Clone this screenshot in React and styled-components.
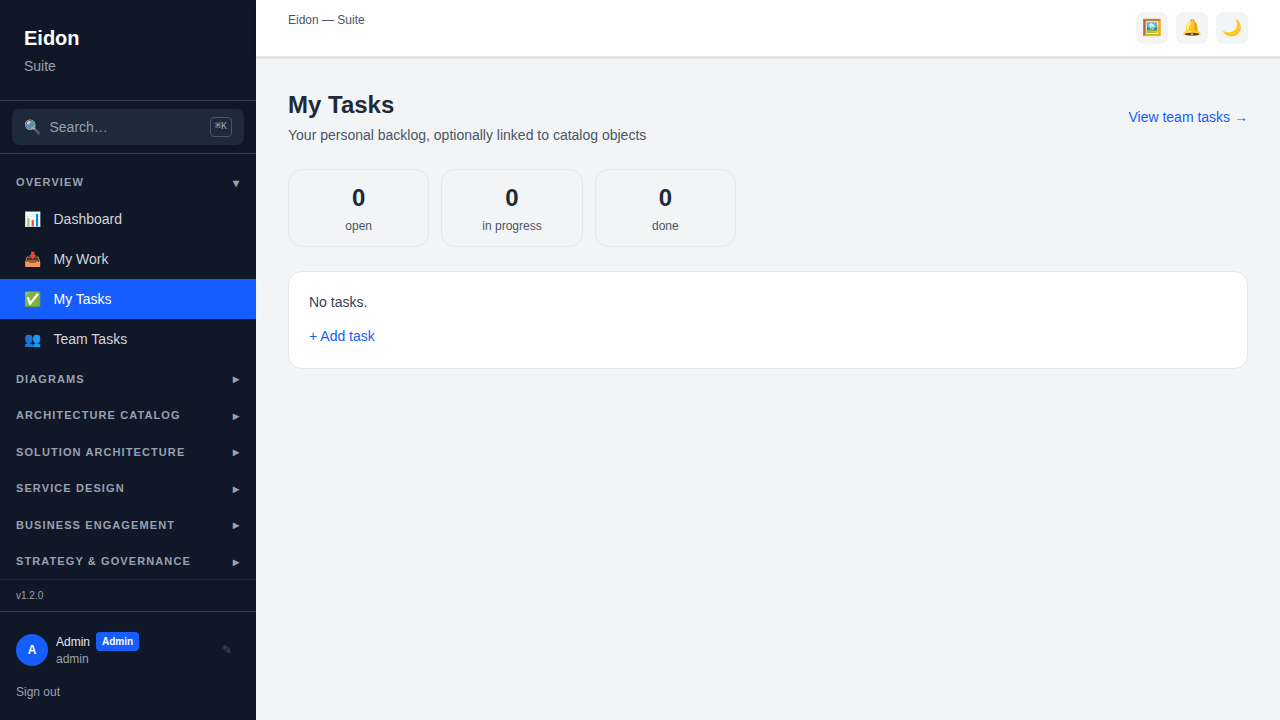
import React, { useState } from 'react';
import styled, { createGlobalStyle } from 'styled-components';

const GlobalStyle = createGlobalStyle`
  *, *::before, *::after {
    box-sizing: border-box;
  }

  body {
    margin: 0;
    font-family: 'Liberation Sans', Arial, sans-serif;
    font-size: 16px;
    line-height: 1.5;
    color: #1e2939;
    background: #f3f4f6;
  }

  h1, h2, p {
    margin: 0;
  }

  button {
    font: inherit;
    color: inherit;
    border: 0;
    padding: 0;
    background: transparent;
    cursor: pointer;
  }

  a {
    color: inherit;
    text-decoration: none;
  }
`;

const Layout = styled.div`
  display: flex;
  height: 100vh;
  overflow: hidden;
`;

// Sidebar
const Sidebar = styled.aside`
  display: flex;
  flex-direction: column;
  flex-shrink: 0;
  width: 256px;
  background: #101828;
  color: #fff;
`;

const Brand = styled.div`
  padding: 24px;
  border-bottom: 1px solid #364153;
`;

const BrandName = styled.h1`
  font-size: 20px;
  line-height: 28px;
  font-weight: 700;
`;

const BrandSub = styled.p`
  margin-top: 4px;
  font-size: 14px;
  line-height: 20px;
  color: #99a1af;
`;

const SearchWrap = styled.div`
  padding: 8px 12px;
  border-bottom: 1px solid #364153;
`;

const SearchButton = styled.button`
  display: flex;
  align-items: center;
  gap: 8px;
  width: 100%;
  height: 36px;
  padding: 0 12px;
  border-radius: 8px;
  background: #1e2939;
  color: #99a1af;
  font-size: 14px;
  line-height: 20px;
  text-align: left;
`;

const Emoji = styled.span`
  width: 17.5px;
  flex-shrink: 0;
`;

const SearchLabel = styled.span`
  flex: 1;
`;

const Kbd = styled.kbd`
  padding: 2px 4px;
  border: 1px solid #4a5565;
  border-radius: 4px;
  font-family: 'Liberation Mono', monospace;
  font-size: 10px;
  line-height: 14px;
`;

const Nav = styled.nav`
  flex: 1;
  min-height: 0;
  padding: 8px 0;
  overflow: hidden;
`;

const GroupHeader = styled.button`
  display: flex;
  align-items: center;
  justify-content: space-between;
  width: 100%;
  padding: 12px 16px 8px;
  font-size: 11px;
  line-height: 16.5px;
  font-weight: 600;
  letter-spacing: 1.1px;
  text-transform: uppercase;
  color: #99a1af;
`;

const Caret = styled.span`
  padding-top: 1px;
  font-size: 12px;
  line-height: 14.5px;
`;

const NavItem = styled.a`
  display: flex;
  align-items: center;
  gap: 12px;
  padding: 10px 24px;
  font-size: 14px;
  line-height: 20px;
  color: ${({ $active }) => ($active ? '#fff' : '#d1d5dc')};
  background: ${({ $active }) => ($active ? '#155dfc' : 'transparent')};
`;

const Version = styled.div`
  padding: 8px 16px;
  border-top: 1px solid #1e2939;
  font-size: 10px;
  line-height: 15px;
  color: #99a1af;
`;

const UserPanel = styled.div`
  height: 109px;
  padding: 20px 16px 0;
  border-top: 1px solid #364153;
  font-size: 12px;
  line-height: 16px;
`;

const UserRow = styled.div`
  display: flex;
  align-items: center;
  gap: 8px;
  padding-right: 8px;
`;

const Avatar = styled.div`
  display: flex;
  align-items: center;
  justify-content: center;
  width: 32px;
  height: 32px;
  border-radius: 50%;
  background: #155dfc;
  font-weight: 700;
`;

const UserInfo = styled.div`
  flex: 1;
`;

const UserName = styled.div`
  display: flex;
  align-items: center;
  gap: 6px;
  color: #e5e7eb;
`;

const RoleBadge = styled.span`
  padding: 2px 6px;
  border-radius: 4px;
  background: #155dfc;
  color: #fff;
  font-size: 10px;
  line-height: 15px;
  font-weight: 600;
`;

const UserLogin = styled.div`
  color: #99a1af;
`;

const EditIcon = styled.span`
  color: #4a5565;
`;

const SignOut = styled.button`
  display: block;
  margin-top: 17px;
  color: #99a1af;
`;

// Main column
const Main = styled.div`
  display: flex;
  flex: 1;
  flex-direction: column;
  min-width: 0;
`;

const TopBar = styled.header`
  display: flex;
  align-items: flex-start;
  justify-content: space-between;
  padding: 12px 32px;
  border-bottom: 1px solid #e5e7eb;
  background: #fff;
  box-shadow: 0 1px 3px rgba(0, 0, 0, 0.1), 0 1px 2px -1px rgba(0, 0, 0, 0.1);
  font-size: 12px;
  line-height: 16px;
  color: #4a5565;
`;

const Actions = styled.div`
  display: flex;
  gap: 8px;
`;

const IconButton = styled.button`
  display: flex;
  align-items: center;
  justify-content: center;
  width: 32px;
  height: 32px;
  border-radius: 8px;
  background: #f3f4f6;
  font-size: 16px;
  line-height: 24px;
`;

const Content = styled.main`
  flex: 1;
  padding: 32px;
`;

const PageHeader = styled.div`
  display: flex;
  align-items: center;
  justify-content: space-between;
  margin-bottom: 24px;
`;

const PageTitle = styled.h2`
  font-size: 24px;
  line-height: 32px;
  font-weight: 700;
`;

const PageSub = styled.p`
  margin-top: 4px;
  font-size: 14px;
  line-height: 20px;
  color: #4a5565;
`;

const TextLink = styled.a`
  font-size: 14px;
  line-height: 20px;
  color: #155dfc;
`;

const Stats = styled.div`
  display: grid;
  grid-template-columns: repeat(3, 1fr);
  gap: 12px;
  max-width: 448px;
  margin-bottom: 24px;
`;

const Stat = styled.div`
  padding: 12px;
  border: 1px solid #e5e7eb;
  border-radius: 14px;
  text-align: center;
`;

const StatValue = styled.div`
  font-size: 24px;
  line-height: 32px;
  font-weight: 700;
`;

const StatLabel = styled.div`
  margin-top: 4px;
  font-size: 12px;
  line-height: 16px;
  color: #4a5565;
`;

const Card = styled.section`
  padding: 20px;
  border: 1px solid #e5e7eb;
  border-radius: 14px;
  background: #fff;
`;

const Empty = styled.p`
  margin-bottom: 12px;
  font-size: 14px;
  line-height: 20px;
  color: #364153;
`;

const groups = [
  {
    title: 'Overview',
    items: [
      { icon: '📊', label: 'Dashboard' },
      { icon: '📥', label: 'My Work' },
      { icon: '✅', label: 'My Tasks' },
      { icon: '👥', label: 'Team Tasks' },
    ],
  },
  { title: 'Diagrams', items: [] },
  { title: 'Architecture Catalog', items: [] },
  { title: 'Solution Architecture', items: [] },
  { title: 'Service Design', items: [] },
  { title: 'Business Engagement', items: [] },
  { title: 'Strategy & Governance', items: [] },
];

const stats = [
  { label: 'open', value: 0 },
  { label: 'in progress', value: 0 },
  { label: 'done', value: 0 },
];

function NavGroup({ title, items, defaultOpen }) {
  const [open, setOpen] = useState(defaultOpen);

  return (
    <div>
      <GroupHeader onClick={() => setOpen(!open)}>
        <span>{title}</span>
        <Caret>{open ? '▾' : '▸'}</Caret>
      </GroupHeader>
      {open &&
        items.map((item) => (
          <NavItem key={item.label} href="#" $active={item.label === 'My Tasks'}>
            <Emoji>{item.icon}</Emoji>
            <span>{item.label}</span>
          </NavItem>
        ))}
    </div>
  );
}

function App() {
  return (
    <>
      <GlobalStyle />
      <Layout>
        <Sidebar>
          <Brand>
            <BrandName>Eidon</BrandName>
            <BrandSub>Suite</BrandSub>
          </Brand>
          <SearchWrap>
            <SearchButton>
              <Emoji>🔍</Emoji>
              <SearchLabel>Search…</SearchLabel>
              <Kbd>⌘K</Kbd>
            </SearchButton>
          </SearchWrap>
          <Nav>
            {groups.map((group, i) => (
              <NavGroup key={group.title} {...group} defaultOpen={i === 0} />
            ))}
          </Nav>
          <Version>v1.2.0</Version>
          <UserPanel>
            <UserRow>
              <Avatar>A</Avatar>
              <UserInfo>
                <UserName>
                  Admin
                  <RoleBadge>Admin</RoleBadge>
                </UserName>
                <UserLogin>admin</UserLogin>
              </UserInfo>
              <EditIcon>✎</EditIcon>
            </UserRow>
            <SignOut>Sign out</SignOut>
          </UserPanel>
        </Sidebar>

        <Main>
          <TopBar>
            <span>Eidon — Suite</span>
            <Actions>
              <IconButton>🖼️</IconButton>
              <IconButton>🔔</IconButton>
              <IconButton>🌙</IconButton>
            </Actions>
          </TopBar>
          <Content>
            <PageHeader>
              <div>
                <PageTitle>My Tasks</PageTitle>
                <PageSub>Your personal backlog, optionally linked to catalog objects</PageSub>
              </div>
              <TextLink href="#">View team tasks →</TextLink>
            </PageHeader>
            <Stats>
              {stats.map((stat) => (
                <Stat key={stat.label}>
                  <StatValue>{stat.value}</StatValue>
                  <StatLabel>{stat.label}</StatLabel>
                </Stat>
              ))}
            </Stats>
            <Card>
              <Empty>No tasks.</Empty>
              <TextLink href="#">+ Add task</TextLink>
            </Card>
          </Content>
        </Main>
      </Layout>
    </>
  );
}

export default App;
